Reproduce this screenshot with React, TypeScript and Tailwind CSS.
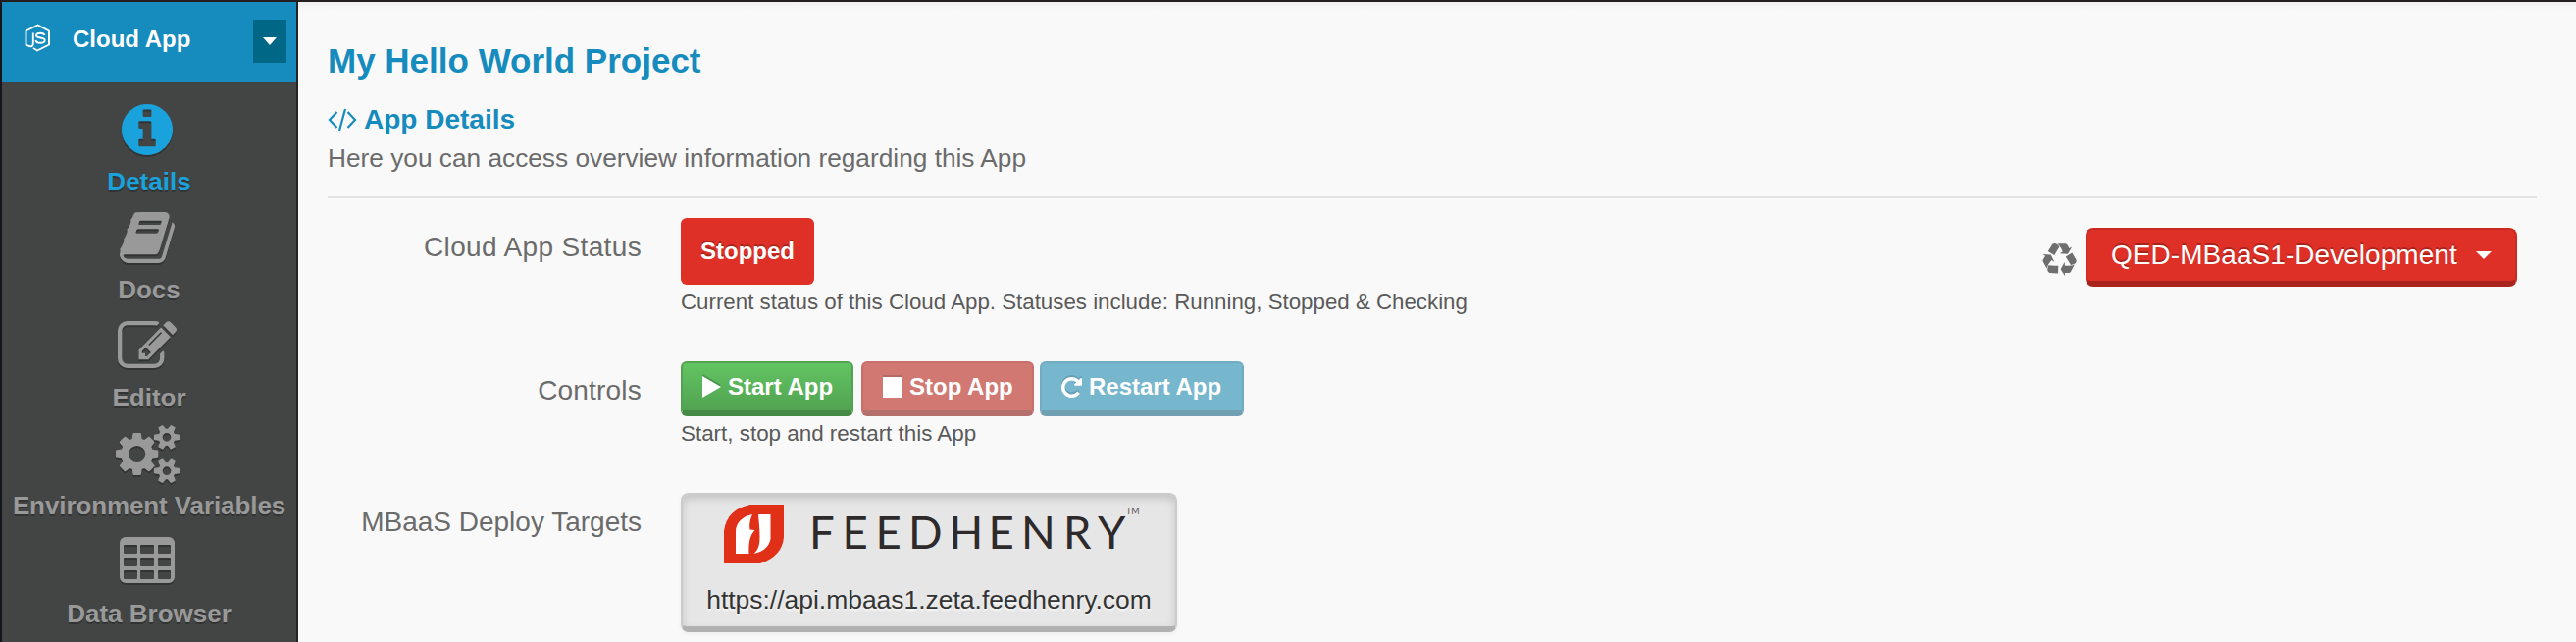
import React from "react";

const infoPath = "M1152 1376v-160q0-14-9-23t-23-9h-96v-512q0-14-9-23t-23-9h-320q-14 0-23 9t-9 23v160q0 14 9 23t23 9h96v320h-96q-14 0-23 9t-9 23v160q0 14 9 23t23 9h448q14 0 23-9t9-23zm-128-896v-160q0-14-9-23t-23-9h-192q-14 0-23 9t-9 23v160q0 14 9 23t23 9h192q14 0 23-9t9-23zm640 416q0 209-103 385.5t-279.5 279.5-385.5 103-385.5-103-279.5-279.5-103-385.5 103-385.5 279.5-279.5 385.5-103 385.5 103 279.5 279.5 103 385.5z";
const bookPath = "M1703 478q40 57 18 129l-275 906q-19 64-76.5 107.5t-122.5 43.5h-923q-77 0-148.5-53.5t-99.5-131.5q-24-67-2-127 0-4 3-27t4-37q1-8-3-21.5t-3-19.5q2-11 8-21t16.5-23.5 16.5-23.5q23-38 45-91.5t30-91.5q3-10 .5-30t-.5-28q3-11 17-28t17-23q21-36 42-92t25-90q1-9-2.5-32t.5-28q4-13 22-30.5t22-22.5q19-26 42.5-84.5t27.5-96.5q1-8-3-25.5t-2-26.5q2-8 9-18t18-23 17-21q8-12 16.5-30.5t15-35 16-36 19.5-32 26.5-23.5 36-11.5 47.5 5.5l-1 3q38-9 51-9h761q74 0 114 56t18 130l-274 906q-36 119-71.5 153.5t-128.5 34.5h-869q-27 0-38 15-11 16-1 43 24 70 144 70h923q29 0 56-15.5t35-41.5l300-987q7-22 5-57 38 15 59 43zm-1064 2q-4 13 2 22.5t20 9.5h608q13 0 25.5-9.5t16.5-22.5l21-64q4-13-2-22.5t-20-9.5h-608q-13 0-25.5 9.5t-16.5 22.5zm-83 256q-4 13 2 22.5t20 9.5h608q13 0 25.5-9.5t16.5-22.5l21-64q4-13-2-22.5t-20-9.5h-608q-13 0-25.5 9.5t-16.5 22.5z";
const editPath = "M888 1184l116-116-152-152-116 116v56h96v96h56zm440-720q-16-16-33 1l-350 350q-17 17-1 33t33-1l350-350q17-17 1-33zm80 594v190q0 119-84.5 203.5t-203.5 84.5h-832q-119 0-203.5-84.5t-84.5-203.5v-832q0-119 84.5-203.5t203.5-84.5h832q63 0 117 25 15 7 18 23 3 17-9 29l-49 49q-14 14-32 8-23-6-45-6h-832q-66 0-113 47t-47 113v832q0 66 47 113t113 47h832q66 0 113-47t47-113v-126q0-13 9-22l64-64q15-15 35-7t20 29zm-96-738l288 288-672 672h-288v-288zm444 132l-92 92-288-288 92-92q28-28 68-28t68 28l152 152q28 28 28 68t-28 68z";
const cogsPath = "M896 896q0-106-75-181t-181-75-181 75-75 181 75 181 181 75 181-75 75-181zm768 512q0-52-38-90t-90-38-90 38-38 90q0 53 37.5 90.5t90.5 37.5 90.5-37.5 37.5-90.5zm0-1024q0-52-38-90t-90-38-90 38-38 90q0 53 37.5 90.5t90.5 37.5 90.5-37.5 37.5-90.5zm-384 421v185q0 10-7 19.5t-16 10.5l-155 24q-11 35-32 76 34 48 90 115 7 11 7 20 0 12-7 19-23 30-82.5 89.5t-78.5 59.5q-11 0-21-7l-115-90q-37 19-77 31-11 108-23 155-7 24-30 24h-186q-11 0-20-7.5t-10-17.5l-23-153q-34-10-75-31l-118 89q-7 7-20 7-11 0-21-8-144-133-144-160 0-9 7-19 10-14 41-53t47-61q-23-44-35-82l-152-24q-10-1-17-9.5t-7-19.5v-185q0-10 7-19.5t16-10.5l155-24q11-35 32-76-34-48-90-115-7-11-7-20 0-12 7-20 22-30 82-89t79-59q11 0 21 7l115 90q34-18 77-32 11-108 23-154 7-24 30-24h186q11 0 20 7.5t10 17.5l23 153q34 10 75 31l118-89q8-7 20-7 11 0 21 8 144 133 144 160 0 8-7 19-12 16-42 54t-45 60q23 48 34 82l152 23q10 2 17 10.5t7 19.5zm640 533v140q0 16-149 31-12 27-30 52 51 113 51 138 0 4-4 7-122 71-124 71-8 0-46-47t-52-68q-20 2-30 2t-30-2q-14 21-52 68t-46 47q-2 0-124-71-4-3-4-7 0-25 51-138-18-25-30-52-149-15-149-31v-140q0-16 149-31 13-29 30-52-51-113-51-138 0-4 4-7 4-2 35-20t59-34 30-16q8 0 46 46.5t52 67.5q20-2 30-2t30 2q51-71 92-112l6-2q4 0 124 70 4 3 4 7 0 25-51 138 17 23 30 52 149 15 149 31zm0-1024v140q0 16-149 31-12 27-30 52 51 113 51 138 0 4-4 7-122 71-124 71-8 0-46-47t-52-68q-20 2-30 2t-30-2q-14 21-52 68t-46 47q-2 0-124-71-4-3-4-7 0-25 51-138-18-25-30-52-149-15-149-31v-140q0-16 149-31 13-29 30-52-51-113-51-138 0-4 4-7 4-2 35-20t59-34 30-16q8 0 46 46.5t52 67.5q20-2 30-2t30 2q51-71 92-112l6-2q4 0 124 70 4 3 4 7 0 25-51 138 17 23 30 52 149 15 149 31z";
const repeatPath = "M1664 256v448q0 26-19 45t-45 19h-448q-42 0-59-40-17-39 14-69l138-138q-148-137-349-137-104 0-198.500 40.500t-163.500 109.500-109.500 163.500-40.500 198.500 40.500 198.500 109.500 163.500 163.500 109.500 198.500 40.500q119 0 225-52t179-147q7-10 23-12 15 0 25 9l137 138q9 8 9.500 20.500t-7.500 22.500q-109 132-264 204.500t-327 72.500q-156 0-298-61t-245-164-164-245-61-298 61-298 164-245 245-164 298-61q147 0 284.500 55.500t244.500 156.500l130-129q29-31 70-14 39 17 39 59z";
const recyclePath = "M836 1169l-15 368-2 22-420-29q-36-3-67-31.500t-47-65.500q-11-27-14.500-55t4-65 12-55 21.500-64 19-53q78 12 509 28zm-387-586l180 379-147-92q-63 72-111.500 144.500t-72.500 125-39.500 94.500-18.500 63l-4 21-190-357q-17-26-18-56t6-47l8-18q35-63 114-188l-140-86zm1231 517l-188 359q-12 29-36.500 46.500t-43.500 20.500l-18 4q-71 7-219 12l8 164-230-367 211-362 7 173q170 16 283 5t170-33zm-785-924q-47 63-265 435l-317-187-19-12 225-356q20-31 60-45t80-10q24 2 48.500 12t42 21 41.500 33 36 34.500 36 39.500 32 35zm655 307l212 363q18 37 12.500 76t-27.500 74q-13 20-33 37t-38 28-48.500 22-47 16-51.500 14-46 12q-34-72-265-436l313-195zm-143-226l142-83-220 373-419-20 151-86q-34-89-75-166t-75.500-123.500-64.500-80-47-46.500l-17-13 405 1q31-3 58 10.500t39 28.500l11 15q39 61 112 190z";

function TableIcon() {
  return (
    <svg width="56" height="47" viewBox="0 0 56 47" fill="currentColor" className="overflow-visible drop-shadow-[0_2px_0_rgba(0,0,0,0.25)]">
      <path fillRule="evenodd" d="M6 0H50a6 6 0 0 1 6 6V41a6 6 0 0 1-6 6H6a6 6 0 0 1-6-6V6a6 6 0 0 1 6-6ZM5 8h12a1 1 0 0 1 1 1v7a1 1 0 0 1-1 1H5a1 1 0 0 1-1-1V9a1 1 0 0 1 1-1ZM22 8h12a1 1 0 0 1 1 1v7a1 1 0 0 1-1 1H22a1 1 0 0 1-1-1V9a1 1 0 0 1 1-1ZM40 8h11a1 1 0 0 1 1 1v7a1 1 0 0 1-1 1H40a1 1 0 0 1-1-1V9a1 1 0 0 1 1-1ZM5 21h12a1 1 0 0 1 1 1v7a1 1 0 0 1-1 1H5a1 1 0 0 1-1-1v-7a1 1 0 0 1 1-1ZM22 21h12a1 1 0 0 1 1 1v7a1 1 0 0 1-1 1H22a1 1 0 0 1-1-1v-7a1 1 0 0 1 1-1ZM40 21h11a1 1 0 0 1 1 1v7a1 1 0 0 1-1 1H40a1 1 0 0 1-1-1v-7a1 1 0 0 1 1-1ZM5 34h12a1 1 0 0 1 1 1v7a1 1 0 0 1-1 1H5a1 1 0 0 1-1-1v-7a1 1 0 0 1 1-1ZM22 34h12a1 1 0 0 1 1 1v7a1 1 0 0 1-1 1H22a1 1 0 0 1-1-1v-7a1 1 0 0 1 1-1ZM40 34h11a1 1 0 0 1 1 1v7a1 1 0 0 1-1 1H40a1 1 0 0 1-1-1v-7a1 1 0 0 1 1-1Z" />
    </svg>
  );
}

function Glyph({ d, box, w, h }: { d: string; box: string; w: number; h: number }) {
  return (
    <svg width={w} height={h} viewBox={box} preserveAspectRatio="none" fill="currentColor" className="overflow-visible drop-shadow-[0_2px_0_rgba(0,0,0,0.25)]">
      <path d={d} />
    </svg>
  );
}

function NavItem({ label, active, iconClass = "pb-0", labelClass = "tracking-normal", children }: { label: string; active?: boolean; iconClass?: string; labelClass?: string; children: React.ReactNode }) {
  return (
    <a className={"flex h-[110px] shrink-0 flex-col items-center " + (active ? "text-[#1aa2dc]" : "text-[#999999]")}>
      <span className={"mr-[4px] flex h-[66px] items-center justify-center " + iconClass}>{children}</span>
      <span className={"whitespace-nowrap text-[26px] leading-[40px] font-bold [text-shadow:0_2px_0_rgba(0,0,0,0.25)] " + labelClass}>{label}</span>
    </a>
  );
}

function Row({ label, className, labelClass = "tracking-normal", children }: { label: string; className: string; labelClass?: string; children: React.ReactNode }) {
  return (
    <div className={"flex items-start " + className}>
      <div className={"mr-[40px] w-[320px] pt-[10px] text-right text-[28px] leading-[40px] text-[#6b6b6b] " + labelClass}>{label}</div>
      {children}
    </div>
  );
}

export default function App() {
  return (
    <div className="flex h-[654px] w-[2626px] overflow-hidden border-t-2 border-[#231f20] bg-[#f9f9f9] font-['Liberation_Sans',Arial,sans-serif]">
      <aside className="flex w-[304px] shrink-0 flex-col border-r-2 border-l-2 border-r-[#242424] border-l-[#15151c] bg-[#434544]">
        <header className="flex h-[82px] shrink-0 items-start bg-[#168bbd] pt-[18px] pr-[10px] pl-[23px] text-white">
          <svg width="27" height="29" viewBox="0 0 27 29" fill="none" stroke="currentColor" strokeWidth="1.9" className="mt-[4px]">
            <path d="M9 25L13 27.500L25 21.500V7.500L13.500 1.500L1.500 7.500V21.500L5 23C8 24 8.800 22.500 8.800 20V9.500" />
            <path d="M20.500 12C20 10 18.500 9.700 16 9.700C13.500 9.700 12 10.500 12 12.200C12 15.700 20.700 13.200 20.700 17C20.700 19.200 18.500 19.800 16 19.800C13 19.800 11.700 18.900 11.500 16.800" />
          </svg>
          <span className="ml-[22px] pt-[2px] text-[24px] leading-[36px] font-bold">Cloud App</span>
          <button className="ml-auto flex h-[44px] w-[34px] items-center justify-center bg-[#006787]">
            <svg width="14" height="8" viewBox="0 0 14 8" fill="white"><path d="M0 0H14L7 8Z" /></svg>
          </button>
        </header>
        <nav className="flex flex-col pt-[15px]">
          <NavItem label="Details" active><Glyph d={infoPath} box="128 128 1536 1536" w={52} h={52} /></NavItem>
          <NavItem label="Docs"><Glyph d={bookPath} box="64 128 1664 1536" w={56} h={52} /></NavItem>
          <NavItem label="Editor" iconClass="pb-[3px]"><Glyph d={editPath} box="0 128 1784 1408" w={60} h={48} /></NavItem>
          <NavItem label="Environment Variables" labelClass="tracking-[-0.1px]"><Glyph d={cogsPath} box="0 16 1920 1760" w={65} h={59} /></NavItem>
          <NavItem label="Data Browser" iconClass="pb-[3px]"><TableIcon /></NavItem>
        </nav>
      </aside>

      <main className="flex grow flex-col bg-linear-to-b from-[#f0f0f0] from-0% to-[#f9f9f9] to-[8px] pr-[40px] pl-[30px]">
        <h1 className="mt-[36px] text-[35px] leading-[48px] font-bold text-[#168bbd]">My Hello World Project</h1>
        <h2 className="mt-[16px] flex items-center text-[28px] leading-[40px] font-bold text-[#168bbd]">
          <svg width="30" height="24" viewBox="0 0 30 24" fill="none" stroke="currentColor" strokeWidth="2.2" className="mr-[7px]">
            <path d="M9.500 4L2 12L9.500 20M20.500 4L28 12L20.500 20M18 1L12 23" />
          </svg>
          App Details
        </h2>
        <p className="text-[26.25px] leading-[38px] text-[#6b6b6b]">Here you can access overview information regarding this App</p>
        <hr className="mt-[20px] border-t-2 border-[#e3e3e3]" />

        <div className="flex items-start justify-between">
          <Row label="Cloud App Status" className="pt-[20px]" labelClass="tracking-[0.35px]">
            <div>
              <span className="flex h-[68px] w-[136px] items-center justify-center rounded-[6px] bg-[#df3027] text-[24px] font-bold text-white [text-shadow:0_-2px_0_rgba(0,0,0,0.25)]">Stopped</span>
              <p className="text-[22.3px] leading-[36px] text-[#595959]">Current status of this Cloud App. Statuses include: Running, Stopped &amp; Checking</p>
            </div>
          </Row>
          <div className="mt-[30px] mr-[20px] flex items-center">
            <svg width="35" height="35" viewBox="0 0 1792 1792" fill="currentColor" className="mt-[6px] mr-[9px] text-[#6e6e6e]">
              <path d={recyclePath} />
            </svg>
            <button className="flex h-[60px] w-[440px] items-center rounded-[8px] border-2 border-b-[6px] border-[#c92b23] border-b-[#a8241d] bg-[#df3027] pl-[24px] text-[28px] tracking-[0.05px] text-white [text-shadow:0_-2px_0_rgba(0,0,0,0.25)]">
              QED-MBaaS1-Development
              <svg width="16" height="8" viewBox="0 0 16 8" fill="white" className="ml-[19px]"><path d="M0 0H16L8 8Z" /></svg>
            </button>
          </div>
        </div>

        <Row label="Controls" className="mt-[42px]" labelClass="tracking-[0.2px]">
          <div>
            <div className="flex text-[24px] font-bold text-white [text-shadow:0_-2px_0_rgba(0,0,0,0.25)]">
              <button className="flex h-[56px] w-[176px] items-center rounded-[6px] border-2 border-b-[6px] border-[#51a351] border-b-[#458b45] bg-linear-to-b from-[#62c462] to-[#51a351] pl-[20px]">
                <svg width="19" height="22" viewBox="0 0 19 22" fill="white" className="mr-[7px] drop-shadow-[0_-2px_0_rgba(0,0,0,0.2)]"><path d="M0 0L19 11L0 22Z" /></svg>
                Start App
              </button>
              <button className="ml-[8px] flex h-[56px] w-[176px] items-center rounded-[6px] border-2 border-b-[6px] border-[#c76f6b] border-b-[#b3706d] bg-[#d17873] pl-[20px]">
                <svg width="20" height="21" viewBox="0 0 20 21" fill="white" className="mr-[7px] drop-shadow-[0_-2px_0_rgba(0,0,0,0.13)]"><path d="M0 0H20V21H0Z" /></svg>
                Stop App
              </button>
              <button className="ml-[6px] flex h-[56px] w-[208px] items-center rounded-[6px] border-2 border-b-[6px] border-[#72acc0] border-b-[#70a0b1] bg-[#76b7cd] pl-[20px]">
                <svg width="21" height="21" viewBox="128 128 1536 1536" fill="white" className="mr-[7px] drop-shadow-[0_-2px_0_rgba(0,0,0,0.13)]"><path d={repeatPath} /></svg>
                Restart App
              </button>
            </div>
            <p className="text-[22.4px] leading-[36px] text-[#595959]">Start, stop and restart this App</p>
          </div>
        </Row>

        <Row label="MBaaS Deploy Targets" className="mt-[42px]">
          <div className="flex h-[142px] w-[506px] flex-col rounded-[8px] border-2 border-b-[6px] border-[#cbcbcb] border-b-[#b1b1b1] bg-[#e6e6e6] shadow-[inset_0_4px_8px_rgba(0,0,0,0.15),0_2px_4px_rgba(0,0,0,0.05)]">
            <div className="flex h-[70px] pt-[10px] pl-[42px]">
              <svg width="450" height="62" viewBox="0 0 450 62" fill="none">
                <path d="M27 0H61V33C60 46 52 55 37 60H0V27C2 11 12 3 27 0Z" fill="#e03018" />
                <path d="M29 10C27 15 25.500 19 26.500 25.500L31.500 26C27 31 25 37 25.500 50H12V27C12.500 18 19 12 29 10ZM35 10H47.500V35C46 43 40 48 30.500 50C35 46 36.500 41 36.500 33C36.500 24 35.500 17 35 10Z" fill="white" />
                <text x="87 120.500 154.500 188 229.500 269.500 303 346 381" y="45" fill="#2e2a2b" className="font-['Lato',sans-serif] text-[45.500px]">FEEDHENRY</text>
                <text x="410" y="10" fill="#555" className="font-['Lato',sans-serif] text-[9px]">TM</text>
              </svg>
            </div>
            <div className="mt-[19px] text-center text-[26.45px] leading-[36px] text-[#333] [text-shadow:0_2px_2px_rgba(255,255,255,0.75)]">https://api.mbaas1.zeta.feedhenry.com</div>
          </div>
        </Row>
      </main>
    </div>
  );
}
